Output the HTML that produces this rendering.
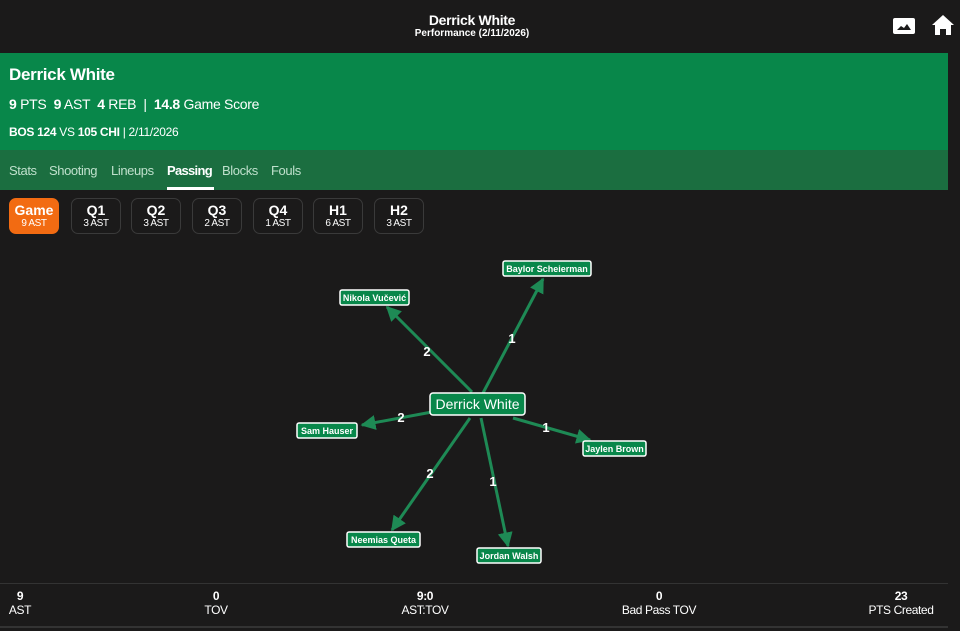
<!DOCTYPE html>
<html><head><meta charset="utf-8"><style>
body{margin:0;width:960px;height:631px;background:#1b1a1a;font-family:"Liberation Sans",sans-serif;color:#fff;position:relative;overflow:hidden}
.a{position:absolute}
.top1{left:0;width:944px;text-align:center;top:12px;font-weight:bold;font-size:14px;letter-spacing:-0.3px}
.top2{left:0;width:944px;text-align:center;top:28px;font-size:10px;font-weight:bold}
.green{left:0;top:53px;width:948px;height:97px;background:#08874a}
.tabs{left:0;top:150px;width:948px;height:40px;background:#1b6e40}
.tab{top:163px;font-size:13px;letter-spacing:-0.4px;color:#bfe0cc}
.btn{top:198px;width:50px;height:36px;border:1.5px solid #3a3a3a;border-radius:7px;text-align:center;box-sizing:border-box}
.btn b{display:block;font-size:14px;margin-top:3px}
.btn span{display:block;font-size:10px;letter-spacing:-0.4px}
.ft{font-size:12px;text-align:center;letter-spacing:-0.4px}
</style></head><body>
<div class="a top1">Derrick White</div>
<div class="a top2">Performance (2/11/2026)</div>
<svg class="a" style="left:892px;top:17px" width="24" height="18"><rect x="1" y="1" width="22" height="16" rx="2" fill="#fff"/><path d="M5 13 L9 9 L12 11 L15 7 L19 13Z" fill="#1b1a1a"/></svg>
<svg class="a" style="left:931px;top:14px" width="24" height="22"><path d="M12 1 L23 11 L20 11 L20 21 L15 21 L15 15 L9 15 L9 21 L4 21 L4 11 L1 11Z" fill="#fff"/></svg>
<div class="a green"></div>
<div class="a" style="left:9px;top:65px;font-size:17px;font-weight:bold;letter-spacing:-0.3px">Derrick White</div>
<div class="a" style="left:9px;top:96px;font-size:14px;letter-spacing:-0.3px"><b>9</b> PTS &nbsp;<b>9</b> AST &nbsp;<b>4</b> REB &nbsp;| &nbsp;<b>14.8</b> Game Score</div>
<div class="a" style="left:9px;top:125px;font-size:12px;letter-spacing:-0.3px"><b>BOS 124</b> VS <b>105 CHI</b> | 2/11/2026</div>
<div class="a tabs"></div>
<div class="a tab" style="left:9px">Stats</div>
<div class="a tab" style="left:49px">Shooting</div>
<div class="a tab" style="left:111px">Lineups</div>
<div class="a tab" style="left:167px;color:#fff;font-weight:bold;letter-spacing:-0.7px">Passing</div>
<div class="a" style="left:167px;top:187px;width:47px;height:3px;background:#fff"></div>
<div class="a tab" style="left:222px">Blocks</div>
<div class="a tab" style="left:271px">Fouls</div>
<div class="a btn" style="left:9px;background:#f26b12;border-color:#f26b12"><b>Game</b><span>9 AST</span></div>
<div class="a btn" style="left:71px"><b>Q1</b><span>3 AST</span></div>
<div class="a btn" style="left:131px"><b>Q2</b><span>3 AST</span></div>
<div class="a btn" style="left:192px"><b>Q3</b><span>2 AST</span></div>
<div class="a btn" style="left:253px"><b>Q4</b><span>1 AST</span></div>
<div class="a btn" style="left:313px"><b>H1</b><span>6 AST</span></div>
<div class="a btn" style="left:374px"><b>H2</b><span>3 AST</span></div>
<svg class="a" style="left:0;top:0" width="960" height="631" font-family="Liberation Sans,sans-serif">
<defs><marker id="m" viewBox="0 0 10 10" refX="9" refY="5" markerWidth="5" markerHeight="5" orient="auto"><path d="M0 0L10 5L0 10Z" fill="#1e8a55"/></marker></defs>
<g stroke="#1e8a55" stroke-width="3" marker-end="url(#m)">
<line x1="483" y1="393" x2="543" y2="279"/>
<line x1="472" y1="392" x2="387" y2="307"/>
<line x1="432" y1="412" x2="362" y2="425"/>
<line x1="513" y1="418" x2="590" y2="440"/>
<line x1="470" y1="418" x2="392" y2="530"/>
<line x1="481" y1="418" x2="508" y2="546"/>
</g>
<g fill="#fff" font-weight="bold" font-size="13" text-anchor="middle">
<text x="512" y="343">1</text><text x="427" y="356">2</text><text x="401" y="422">2</text><text x="546" y="432">1</text><text x="430" y="478">2</text><text x="493" y="486">1</text>
</g>
<g stroke="#fff" stroke-width="1.5" fill="#08874a">
<rect x="430" y="393" width="95" height="22" rx="3"/>
<rect x="503" y="261" width="88" height="15" rx="2"/>
<rect x="340" y="290" width="69" height="15" rx="2"/>
<rect x="297" y="423" width="60" height="15" rx="2"/>
<rect x="583" y="441" width="63" height="15" rx="2"/>
<rect x="347" y="532" width="73" height="15" rx="2"/>
<rect x="477" y="548" width="64" height="15" rx="2"/>
</g>
<g fill="#fff" font-size="9" font-weight="bold" text-anchor="middle">
<text x="477.5" y="409" font-size="14" font-weight="normal">Derrick White</text>
<text x="547" y="272">Baylor Scheierman</text>
<text x="374.5" y="301">Nikola Vučević</text>
<text x="327" y="434">Sam Hauser</text>
<text x="614.5" y="452">Jaylen Brown</text>
<text x="383.5" y="543">Neemias Queta</text>
<text x="509" y="559">Jordan Walsh</text>
</g>
</svg>
<div class="a" style="left:0;top:583px;width:948px;height:1px;background:#333"></div>
<div class="a" style="left:0;top:626px;width:948px;height:2px;background:#333"></div>
<div class="a ft" style="left:0;width:40px;top:589px"><b>9</b><br>AST</div>
<div class="a ft" style="left:176px;width:80px;top:589px"><b>0</b><br>TOV</div>
<div class="a ft" style="left:385px;width:80px;top:589px"><b>9:0</b><br>AST:TOV</div>
<div class="a ft" style="left:609px;width:100px;top:589px"><b>0</b><br>Bad Pass TOV</div>
<div class="a ft" style="left:856px;width:90px;top:589px"><b>23</b><br>PTS Created</div>
</body></html>
